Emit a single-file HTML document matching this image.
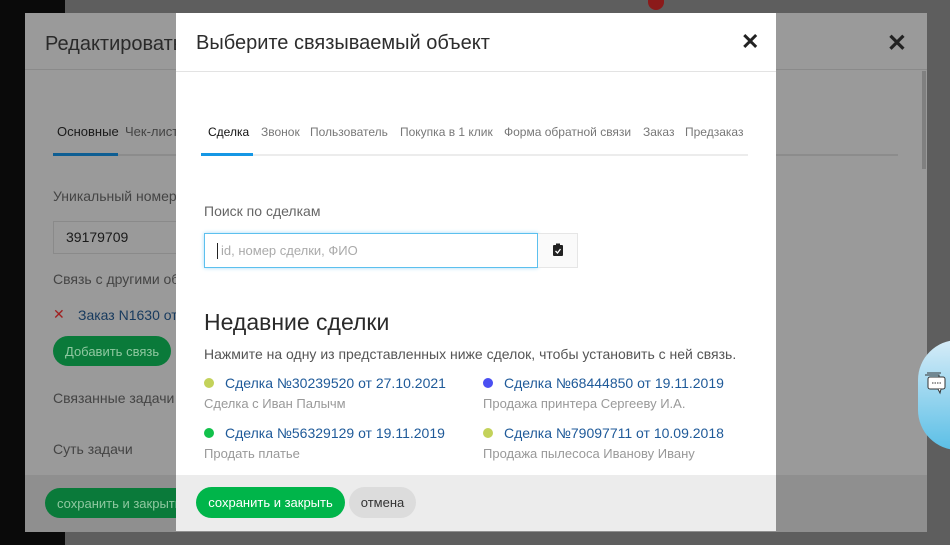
<!DOCTYPE html>
<html><head><meta charset="utf-8"><style>
*{box-sizing:border-box;margin:0;padding:0}
body{width:950px;height:545px;overflow:hidden;background:#5e5e5e;font-family:"Liberation Sans",Arial,sans-serif;position:relative}
.abs{position:absolute;white-space:nowrap}
.sb{left:0;top:0;width:65px;height:545px;background:#0a0a0a}
.back{left:25px;top:13px;width:902px;height:519px;background:#9a9a9a;overflow:hidden}
.front{left:176px;top:13px;width:600px;height:518px;background:#fff;overflow:hidden}
</style></head><body>
<div class="abs sb"></div>
<div class="abs" style="left:648px;top:0;width:16px;height:10px;border-radius:0 0 8px 8px;background:#8b1a1a"></div>
<div class="abs back">
  <div class="abs" style="left:20px;top:20px;font-size:20px;color:#2a2a2a">Редактировать</div>
  <div class="abs" style="right:20px;top:16px;font-size:24px;color:#222;font-weight:bold">✕</div>
  <div class="abs" style="left:0;top:56px;width:902px;height:1px;background:#8a8a8a"></div>
  <div class="abs" style="left:32px;top:111px;font-size:13px;color:#1a1a1a">Основные</div>
  <div class="abs" style="left:100px;top:111px;font-size:13px;color:#444">Чек-листы</div>
  <div class="abs" style="left:28px;top:140px;width:65px;height:3px;background:#0e5e93"></div>
  <div class="abs" style="left:93px;top:141px;width:780px;height:2px;background:#8c8c8c"></div>
  <div class="abs" style="left:28px;top:175px;font-size:14px;color:#444">Уникальный номер</div>
  <div class="abs" style="left:28px;top:208px;width:200px;height:33px;border:1px solid #8a8a8a"></div>
  <div class="abs" style="left:41px;top:216px;font-size:14px;color:#1a1a1a">39179709</div>
  <div class="abs" style="left:28px;top:258px;font-size:14px;color:#444">Связь с другими объектами</div>
  <div class="abs" style="left:28px;top:293px;font-size:14px;color:#a02020">✕</div>
  <div class="abs" style="left:53px;top:294px;font-size:14px;color:#173a5e">Заказ N1630 от</div>
  <div class="abs" style="left:28px;top:323px;width:118px;height:30px;border-radius:15px;background:#0a7a3a;color:#8fc8a0;font-size:13px;padding:8px 12px">Добавить связь</div>
  <div class="abs" style="left:28px;top:377px;font-size:14px;color:#444">Связанные задачи</div>
  <div class="abs" style="left:28px;top:428px;font-size:14px;color:#444">Суть задачи</div>
  <div class="abs" style="left:0;top:462px;width:902px;height:57px;background:#8f8f8f"></div>
  <div class="abs" style="left:20px;top:475px;width:170px;height:30px;border-radius:15px;background:#0a7a3a;color:#8fc8a0;font-size:13px;padding:8px 12px">сохранить и закрыть</div>
  <div class="abs" style="left:897px;top:58px;width:4px;height:98px;background:#808080"></div>
</div>
<div class="abs" style="left:918px;top:340px;width:40px;height:110px;border-radius:40px 0 0 40px;background:linear-gradient(#d6ecf8,#5bbfe6)"></div>
<svg class="abs" style="left:922px;top:372px" width="26" height="24" viewBox="0 0 26 24"><path d="M3 3h14v8M5 1h14" fill="none" stroke="#333" stroke-width="1"/><rect x="6" y="5" width="17" height="12" rx="2" fill="#fff" stroke="#333"/><path d="M16 17l2 4 1-4" fill="#fff" stroke="#333"/><path d="M10 11h9" stroke="#333" stroke-dasharray="1.5 1"/></svg>
<div class="abs front">
  <div class="abs" style="left:20px;top:19px;font-size:20px;color:#2d2d2d">Выберите связываемый объект</div>
  <div class="abs" style="left:565px;top:16px;font-size:22px;color:#222;font-weight:bold">✕</div>
  <div class="abs" style="left:0;top:58px;width:600px;height:1px;background:#e3e3e3"></div>
  <div class="abs" style="left:32px;top:112px;font-size:12px;color:#111">Сделка</div>
  <div class="abs" style="left:85px;top:112px;font-size:12px;color:#777">Звонок</div>
  <div class="abs" style="left:134px;top:112px;font-size:12px;color:#777">Пользователь</div>
  <div class="abs" style="left:224px;top:112px;font-size:12px;color:#777">Покупка в 1 клик</div>
  <div class="abs" style="left:328px;top:112px;font-size:12px;color:#777">Форма обратной связи</div>
  <div class="abs" style="left:467px;top:112px;font-size:12px;color:#777">Заказ</div>
  <div class="abs" style="left:509px;top:112px;font-size:12px;color:#777">Предзаказ</div>
  <div class="abs" style="left:25px;top:141px;width:547px;height:2px;background:#ececec"></div>
  <div class="abs" style="left:25px;top:140px;width:52px;height:3px;background:#1597e5"></div>
  <div class="abs" style="left:28px;top:190px;font-size:14px;color:#666">Поиск по сделкам</div>
  <div class="abs" style="left:28px;top:220px;width:334px;height:35px;border:1px solid #5cc0ee;box-shadow:0 0 4px #a8dcf6"></div>
  <div class="abs" style="left:41px;top:230px;width:1px;height:16px;background:#222"></div>
  <div class="abs" style="left:45px;top:230px;font-size:13px;color:#aaa">id, номер сделки, ФИО</div>
  <div class="abs" style="left:362px;top:220px;width:40px;height:35px;border:1px solid #e6e6e6;border-left:none;background:#fafafa"></div>
  <svg class="abs" style="left:376px;top:230px" width="12" height="14" viewBox="0 0 12 14"><rect x="1" y="2" width="10" height="11" rx="1" fill="#222"/><rect x="4" y="0.5" width="4" height="3" fill="#222"/><path d="M3.5 8l2 2 3-4" stroke="#fff" stroke-width="1.3" fill="none"/></svg>
  <div class="abs" style="left:28px;top:296px;font-size:23px;color:#2a2a2a">Недавние сделки</div>
  <div class="abs" style="left:28px;top:333px;font-size:14px;color:#555">Нажмите на одну из представленных ниже сделок, чтобы установить с ней связь.</div>
  <div class="abs" style="left:28px;top:365px;width:10px;height:10px;border-radius:50%;background:#c3d25a"></div>
  <div class="abs" style="left:49px;top:362px;font-size:14px;color:#1f5a99">Сделка №30239520 от 27.10.2021</div>
  <div class="abs" style="left:28px;top:383px;font-size:13px;color:#999">Сделка с Иван Палычм</div>
  <div class="abs" style="left:28px;top:415px;width:10px;height:10px;border-radius:50%;background:#12c14b"></div>
  <div class="abs" style="left:49px;top:412px;font-size:14px;color:#1f5a99">Сделка №56329129 от 19.11.2019</div>
  <div class="abs" style="left:28px;top:433px;font-size:13px;color:#999">Продать платье</div>
  <div class="abs" style="left:307px;top:365px;width:10px;height:10px;border-radius:50%;background:#4a4ff2"></div>
  <div class="abs" style="left:328px;top:362px;font-size:14px;color:#1f5a99">Сделка №68444850 от 19.11.2019</div>
  <div class="abs" style="left:307px;top:383px;font-size:13px;color:#999">Продажа принтера Сергееву И.А.</div>
  <div class="abs" style="left:307px;top:415px;width:10px;height:10px;border-radius:50%;background:#c3d25a"></div>
  <div class="abs" style="left:328px;top:412px;font-size:14px;color:#1f5a99">Сделка №79097711 от 10.09.2018</div>
  <div class="abs" style="left:307px;top:433px;font-size:13px;color:#999">Продажа пылесоса Иванову Ивану</div>
  <div class="abs" style="left:0;top:462px;width:600px;height:56px;background:#ececec"></div>
  <div class="abs" style="left:20px;top:474px;width:149px;height:31px;border-radius:16px;background:#00b54a;color:#fff;font-size:13px;text-align:center;line-height:31px">сохранить и закрыть</div>
  <div class="abs" style="left:173px;top:474px;width:67px;height:31px;border-radius:16px;background:#dcdcdc;color:#333;font-size:13px;text-align:center;line-height:31px">отмена</div>
</div>
</body></html>
